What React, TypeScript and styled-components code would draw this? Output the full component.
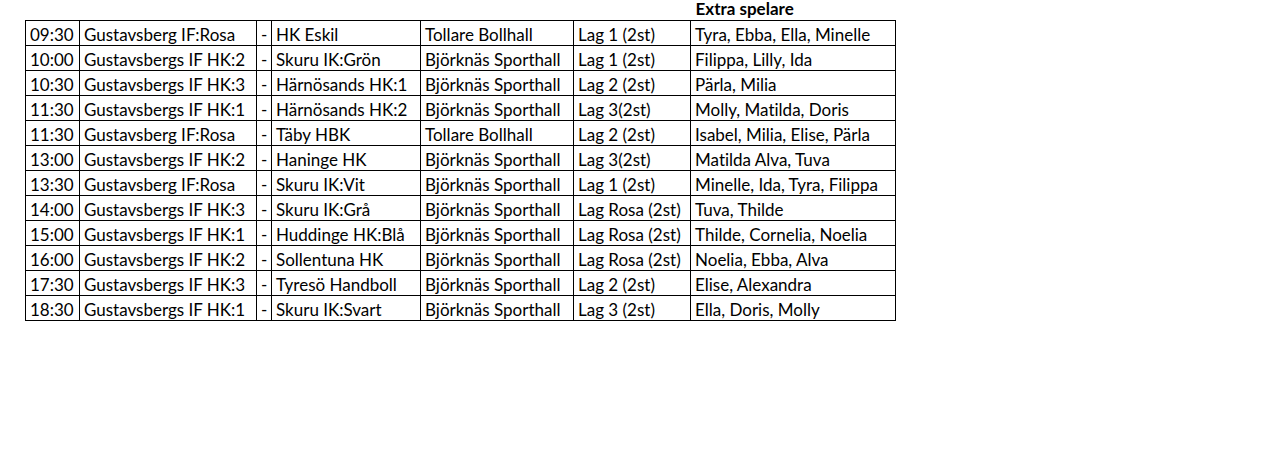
import React, { FC } from "react";
import styled, { createGlobalStyle } from "styled-components";

type Match = {
  time: string;
  home: string;
  away: string;
  hall: string;
  team: string;
  extra: string;
};

const matches: Match[] = [
  { time: "09:30", home: "Gustavsberg IF:Rosa", away: "HK Eskil", hall: "Tollare Bollhall", team: "Lag 1 (2st)", extra: "Tyra, Ebba, Ella, Minelle" },
  { time: "10:00", home: "Gustavsbergs IF HK:2", away: "Skuru IK:Grön", hall: "Björknäs Sporthall", team: "Lag 1 (2st)", extra: "Filippa, Lilly, Ida" },
  { time: "10:30", home: "Gustavsbergs IF HK:3", away: "Härnösands HK:1", hall: "Björknäs Sporthall", team: "Lag 2 (2st)", extra: "Pärla, Milia" },
  { time: "11:30", home: "Gustavsbergs IF HK:1", away: "Härnösands HK:2", hall: "Björknäs Sporthall", team: "Lag 3(2st)", extra: "Molly, Matilda, Doris" },
  { time: "11:30", home: "Gustavsberg IF:Rosa", away: "Täby HBK", hall: "Tollare Bollhall", team: "Lag 2 (2st)", extra: "Isabel, Milia, Elise, Pärla" },
  { time: "13:00", home: "Gustavsbergs IF HK:2", away: "Haninge HK", hall: "Björknäs Sporthall", team: "Lag 3(2st)", extra: "Matilda Alva, Tuva" },
  { time: "13:30", home: "Gustavsberg IF:Rosa", away: "Skuru IK:Vit", hall: "Björknäs Sporthall", team: "Lag 1 (2st)", extra: "Minelle, Ida, Tyra, Filippa" },
  { time: "14:00", home: "Gustavsbergs IF HK:3", away: "Skuru IK:Grå", hall: "Björknäs Sporthall", team: "Lag Rosa (2st)", extra: "Tuva, Thilde" },
  { time: "15:00", home: "Gustavsbergs IF HK:1", away: "Huddinge HK:Blå", hall: "Björknäs Sporthall", team: "Lag Rosa (2st)", extra: "Thilde, Cornelia, Noelia" },
  { time: "16:00", home: "Gustavsbergs IF HK:2", away: "Sollentuna HK", hall: "Björknäs Sporthall", team: "Lag Rosa (2st)", extra: "Noelia, Ebba, Alva" },
  { time: "17:30", home: "Gustavsbergs IF HK:3", away: "Tyresö Handboll", hall: "Björknäs Sporthall", team: "Lag 2 (2st)", extra: "Elise, Alexandra" },
  { time: "18:30", home: "Gustavsbergs IF HK:1", away: "Skuru IK:Svart", hall: "Björknäs Sporthall", team: "Lag 3 (2st)", extra: "Ella, Doris, Molly" },
];

const widths = [54, 177, 15, 149, 153, 117, 205];

const App: FC = () => {
  return (
    <>
      <GlobalStyle />
      <Sheet>
        <Table>
          <colgroup>
            {widths.map((w, i) => (
              <col key={i} style={{ width: w }} />
            ))}
          </colgroup>
          <thead>
            <HeadRow>
              <HeadCell colSpan={6} />
              <HeadCell>Extra spelare</HeadCell>
            </HeadRow>
          </thead>
          <tbody>
            {matches.map((m, i) => (
              <Row key={i}>
                <Cell>{m.time}</Cell>
                <Cell>{m.home}</Cell>
                <Cell>-</Cell>
                <Cell>{m.away}</Cell>
                <Cell>{m.hall}</Cell>
                <Cell>{m.team}</Cell>
                <Cell>{m.extra}</Cell>
              </Row>
            ))}
          </tbody>
        </Table>
      </Sheet>
    </>
  );
};

const GlobalStyle = createGlobalStyle`
  html, body {
    margin: 0;
    padding: 0;
    background: #ffffff;
  }
  body {
    width: 1272px;
    height: 458px;
    overflow: hidden;
    font-family: Lato, "Open Sans", sans-serif;
    font-variant-ligatures: none;
    color: #000000;
  }
`;

const Sheet = styled.div`
  padding: 0 0 0 25px;
`;

const Table = styled.table`
  border-collapse: collapse;
  table-layout: fixed;
  width: 871px;
  font-size: 17px;
`;

const HeadRow = styled.tr`
  height: 20px;
`;

const HeadCell = styled.th`
  padding: 0 0 2px 5px;
  text-align: left;
  vertical-align: bottom;
  font-weight: 700;
  line-height: 18px;
  white-space: nowrap;
`;

const Row = styled.tr`
  height: 25px;
`;

const Cell = styled.td`
  border: 1px solid #000000;
  padding: 0 0 0 4px;
  vertical-align: bottom;
  line-height: 21px;
  white-space: nowrap;
  overflow: hidden;
`;

export default App;
